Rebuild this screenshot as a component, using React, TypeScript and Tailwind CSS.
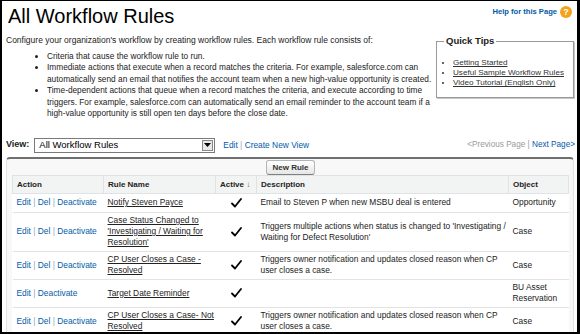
import React from "react";

const font = { fontFamily: '"Liberation Sans", Arial, Helvetica, sans-serif' };

function Check() {
  return (
    <svg width="11" height="10" viewBox="0 0 11 10" className="block mx-auto">
      <path d="M1 5.5 L4 8.5 L10 1" fill="none" stroke="#000" strokeWidth="1.8" strokeLinecap="round" strokeLinejoin="round" />
    </svg>
  );
}

type Row = {
  actions: string[];
  name: string[];
  desc: string[];
  obj: string[];
};

const rows: Row[] = [
  { actions: ["Edit", "Del", "Deactivate"], name: ["Notify Steven Payce"], desc: ["Email to Steven P when new MSBU deal is entered"], obj: ["Opportunity"] },
  {
    actions: ["Edit", "Del", "Deactivate"],
    name: ["Case Status Changed to", "'Investigating / Waiting for", "Resolution'"],
    desc: ["Triggers multiple actions when status is changed to 'Investigating /", "Waiting for Defect Resolution'"],
    obj: ["Case"],
  },
  {
    actions: ["Edit", "Del", "Deactivate"],
    name: ["CP User Closes a Case -", "Resolved"],
    desc: ["Triggers owner notification and updates closed reason when CP", "user closes a case."],
    obj: ["Case"],
  },
  { actions: ["Edit", "Deactivate"], name: ["Target Date Reminder"], desc: [], obj: ["BU Asset", "Reservation"] },
  {
    actions: ["Edit", "Del", "Deactivate"],
    name: ["CP User Closes a Case- Not", "Resolved"],
    desc: ["Triggers owner notification and updates closed reason when CP", "user closes a case."],
    obj: ["Case"],
  },
];

export default function App() {
  return (
    <div
      className="w-[580px] h-[334px] overflow-hidden bg-white border-t border-l-2 border-r-[3px] border-b-2 border-black text-[#333]"
      style={font}
    >
      {/* Header */}
      <div className="flex items-start justify-between pl-[6px] pr-[5px] pt-[3px] h-[32px]">
        <h1 className="text-[20px] leading-[24px] text-black">All Workflow Rules</h1>
        <div className="flex items-center gap-[3px] pt-[2px]">
          <a className="text-[7.6px] font-bold text-[#015ba7]">Help for this Page</a>
          <span className="w-[12px] h-[12px] rounded-full bg-[#f3a21b] text-white text-[9px] font-bold leading-[12px] text-center">?</span>
        </div>
      </div>

      {/* Intro + quick tips */}
      <div className="flex pl-[4px] pr-[3px]">
        <div className="flex-1 text-[8.5px] leading-[11.5px] text-[#222] whitespace-nowrap">
          <p className="pt-[2px]">Configure your organization's workflow by creating workflow rules. Each workflow rule consists of:</p>
          <ul className="list-disc pl-[41px] mt-[4px] text-[8.3px]">
            <li>Criteria that cause the workflow rule to run.</li>
            <li>
              Immediate actions that execute when a record matches the criteria. For example, salesforce.com can
              <br />
              automatically send an email that notifies the account team when a new high-value opportunity is created.
            </li>
            <li>
              Time-dependent actions that queue when a record matches the criteria, and execute according to time
              <br />
              triggers. For example, salesforce.com can automatically send an email reminder to the account team if a
              <br />
              high-value opportunity is still open ten days before the close date.
            </li>
          </ul>
        </div>
        <fieldset className="w-[138px] h-[64px] mt-[1px] border border-[#9a9a9a] shadow-[1px_1px_0_#c8c8c8] px-[6px] pb-[4px] whitespace-nowrap">
          <legend className="text-[9.5px] font-bold text-[#222] px-[2px] ml-[1px]">Quick Tips</legend>
          <ul className="list-disc pl-[10px] mt-[10px] text-[8.1px] leading-[10px]">
            <li><a className="underline">Getting Started</a></li>
            <li><a className="underline">Useful Sample Workflow Rules</a></li>
            <li><a className="underline">Video Tutorial (English Only)</a></li>
          </ul>
        </fieldset>
      </div>

      {/* View row */}
      <div className="flex items-center mt-[18px] pl-[4px] pr-[2px] h-[15px]">
        <span className="text-[9px] font-bold text-[#222]">View:</span>
        <div className="ml-[5px] w-[181px] h-[15px] border border-[#7a7a7a] bg-white flex items-center justify-between pl-[4px] pr-[1px]">
          <span className="text-[9.5px] text-black">All Workflow Rules</span>
          <span className="w-[11px] h-[11px] border border-[#888] bg-[#e8e8e8] flex items-center justify-center">
            <svg width="7" height="4" viewBox="0 0 7 4"><path d="M0 0 H7 L3.5 4 Z" fill="#000" /></svg>
          </span>
        </div>
        <div className="ml-[8px] text-[8.4px] text-[#015ba7]">
          <a>Edit</a> <span className="text-[#8aa7c4]">|</span> <a>Create New View</a>
        </div>
        <div className="ml-auto text-[8.2px]">
          <span className="text-[#999]">&lt;Previous Page</span> <span className="text-[#999]">|</span>{" "}
          <a className="text-[#015ba7]">Next Page&gt;</a>
        </div>
      </div>

      {/* Panel */}
      <div className="ml-[4px] mr-[3px] mt-[4px] border-t-2 border-x border-t-[#6f6f6f] border-x-[#e3e3e3] rounded-t-[4px] bg-[#f8f8f8] pl-[5px] pr-[4px] h-[200px]">
        <div className="flex justify-center pt-[1px] h-[16px]">
          <button className="h-[15px] px-[5px] rounded-[3px] border border-[#b5b5b5] border-b-[#7f7f7f] bg-gradient-to-b from-[#ffffff] to-[#e6e6e6] text-[8px] font-bold text-[#333] leading-[13px]">
            New Rule
          </button>
        </div>
        <table className="w-full border-collapse text-[8.4px] leading-[11px] bg-white">
          <colgroup>
            <col className="w-[91px]" />
            <col className="w-[112px]" />
            <col className="w-[41px]" />
            <col className="w-[252px]" />
            <col />
          </colgroup>
          <thead>
            <tr className="bg-[#f2f3f3] text-[8px] font-bold text-[#222]">
              <th className="text-left font-bold pl-[4px] h-[18px] p-0 border border-[#e0e3e5]">Action</th>
              <th className="text-left font-bold pl-[4px] p-0 border border-[#e0e3e5]">Rule Name</th>
              <th className="text-left font-bold pl-[4px] p-0 border border-[#e0e3e5]">
                Active <span className="text-[#666] font-normal">↓</span>
              </th>
              <th className="text-left font-bold pl-[4px] p-0 border border-[#e0e3e5]">Description</th>
              <th className="text-left font-bold pl-[4px] p-0 border border-[#e0e3e5]">Object</th>
            </tr>
          </thead>
          <tbody>
            {rows.map((r, i) => (
              <tr key={i} className="border-b border-[#e3e3e3] align-middle">
                <td className="pl-[4px] py-[2.5px] h-[19px] text-[#015ba7] whitespace-nowrap">
                  {r.actions.map((a, j) => (
                    <React.Fragment key={a}>
                      {j > 0 && <span className="text-[#8aa7c4]"> | </span>}
                      <a>{a}</a>
                    </React.Fragment>
                  ))}
                </td>
                <td className="pl-[4px] py-[2.5px] text-[#222] whitespace-nowrap">
                  {r.name.map((n, j) => (
                    <div key={j}><span className="underline">{n}</span></div>
                  ))}
                </td>
                <td className="py-[2.5px] leading-[0]"><Check /></td>
                <td className="pl-[4px] py-[2.5px] text-[#222] whitespace-nowrap">
                  {r.desc.map((d, j) => (
                    <div key={j}>{d}</div>
                  ))}
                </td>
                <td className="pl-[4px] py-[2.5px] text-[#222] whitespace-nowrap">
                  {r.obj.map((d, j) => (
                    <div key={j}>{d}</div>
                  ))}
                </td>
              </tr>
            ))}
          </tbody>
        </table>
      </div>
    </div>
  );
}
